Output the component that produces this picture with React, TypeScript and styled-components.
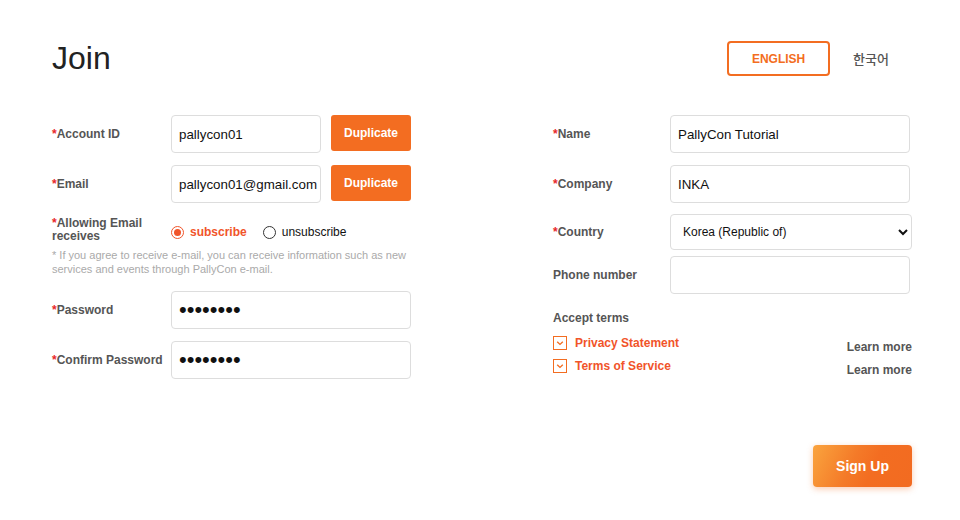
import React from "react";
import styled, { createGlobalStyle } from "styled-components";

const GlobalStyle = createGlobalStyle`
  html, body {
    margin: 0;
    padding: 0;
    background: #fff;
    font-family: "Liberation Sans", Arial, "Noto Sans CJK KR", sans-serif;
  }
  * { box-sizing: border-box; }
`;

const Check = () => (
  <svg width="10" height="10" viewBox="0 0 10 10">
    <path d="M2.2 3.8 L5 6.4 L7.8 3.8" fill="none" stroke="#f36d21" strokeWidth="1.4" />
  </svg>
);

const App = () => {
  return (
    <Page>
      <GlobalStyle />
      <Header>
        <Title>Join</Title>
        <LangGroup>
          <LangButton active>ENGLISH</LangButton>
          <LangButton>한국어</LangButton>
        </LangGroup>
      </Header>

      <Form>
        <Column>
          <Row>
            <Label>
              <Star>*</Star>Account ID
            </Label>
            <Input width={150} defaultValue="pallycon01" />
            <DupButton type="button">Duplicate</DupButton>
          </Row>
          <Row>
            <Label>
              <Star>*</Star>Email
            </Label>
            <Input width={150} defaultValue="pallycon01@gmail.com" />
            <DupButton type="button">Duplicate</DupButton>
          </Row>
          <RadioRow>
            <Label tight>
              <Star>*</Star>Allowing Email receives
            </Label>
            <RadioGroup>
              <RadioItem>
                <RadioCircle checked />
                <RadioText checked>subscribe</RadioText>
              </RadioItem>
              <RadioItem>
                <RadioCircle />
                <RadioText>unsubscribe</RadioText>
              </RadioItem>
            </RadioGroup>
          </RadioRow>
          <Note>
            * If you agree to receive e-mail, you can receive information such as new
            <br />
            services and events through PallyCon e-mail.
          </Note>
          <Row>
            <Label>
              <Star>*</Star>Password
            </Label>
            <Input width={240} secret type="password" defaultValue="12345678" />
          </Row>
          <Row>
            <Label>
              <Star>*</Star>Confirm Password
            </Label>
            <Input width={240} secret type="password" defaultValue="12345678" />
          </Row>
        </Column>

        <Column>
          <Row>
            <Label narrow>
              <Star>*</Star>Name
            </Label>
            <Input width={240} defaultValue="PallyCon Tutorial" />
          </Row>
          <Row>
            <Label narrow>
              <Star>*</Star>Company
            </Label>
            <Input width={240} defaultValue="INKA" />
          </Row>
          <SelectRow>
            <Label narrow>
              <Star>*</Star>Country
            </Label>
            <Select defaultValue="kr">
              <option value="kr">Korea (Republic of)</option>
            </Select>
          </SelectRow>
          <PhoneRow>
            <Label narrow>Phone number</Label>
            <Input width={240} />
          </PhoneRow>
          <TermsTitle>Accept terms</TermsTitle>
          <TermRow>
            <TermLeft>
              <CheckBox>
                <Check />
              </CheckBox>
              <TermText>Privacy Statement</TermText>
            </TermLeft>
            <LearnMore>Learn more</LearnMore>
          </TermRow>
          <TermRow>
            <TermLeft>
              <CheckBox>
                <Check />
              </CheckBox>
              <TermText>Terms of Service</TermText>
            </TermLeft>
            <LearnMore>Learn more</LearnMore>
          </TermRow>
        </Column>
      </Form>

      <Footer>
        <SignUp type="button">Sign Up</SignUp>
      </Footer>
    </Page>
  );
};

export default App;

const Page = styled.div`
  width: 960px;
  height: 520px;
  padding: 38px 48px 0 52px;
`;

const Header = styled.div`
  display: flex;
  justify-content: space-between;
  align-items: center;
  height: 40px;
  margin-bottom: 37px;
`;

const Title = styled.h1`
  margin: 0;
  font-size: 32px;
  font-weight: 400;
  color: #222;
  line-height: 40px;
  font-family: "Liberation Sans", Arial, sans-serif;
`;

const LangGroup = styled.div`
  display: flex;
  align-items: center;
  gap: 23px;
  padding-right: 23px;
  margin-top: 1px;
`;

const LangButton = styled.button<{ active?: boolean }>`
  width: ${(p) => (p.active ? "103px" : "auto")};
  height: 35px;
  border: ${(p) => (p.active ? "2px solid #f36d21" : "none")};
  border-radius: 4px;
  background: #fff;
  color: ${(p) => (p.active ? "#f36d21" : "#555")};
  font-size: ${(p) => (p.active ? "12px" : "13px")};
  font-weight: ${(p) => (p.active ? 700 : 500)};
  font-family: "Liberation Sans", Arial, "Noto Sans CJK KR", sans-serif;
  padding: 0;
  cursor: pointer;
`;

const Form = styled.div`
  display: flex;
  justify-content: space-between;
`;

const Column = styled.div`
  width: 359px;
  display: flex;
  flex-direction: column;
`;

const Row = styled.div`
  display: flex;
  align-items: center;
  height: 38px;
  margin-bottom: 12px;
`;

const SelectRow = styled(Row)`
  height: 36px;
  margin-top: -1px;
  margin-bottom: 6px;
`;

const PhoneRow = styled(Row)`
  margin-bottom: 16px;
`;

const RadioRow = styled.div`
  display: flex;
  align-items: center;
  margin-top: 2px;
`;

const Label = styled.label<{ narrow?: boolean; tight?: boolean }>`
  width: ${(p) => (p.narrow ? "117px" : "119px")};
  flex-shrink: 0;
  font-size: 12px;
  line-height: ${(p) => (p.tight ? "13px" : "16px")};
  font-weight: 700;
  color: #555;
  padding-right: ${(p) => (p.tight ? "24px" : "0")};
`;

const Star = styled.span`
  color: #e8262a;
`;

const Input = styled.input<{ width: number; secret?: boolean }>`
  width: ${(p) => p.width}px;
  height: 38px;
  border: 1px solid #ddd;
  border-radius: 4px;
  padding: 0 2px 0 7px;
  font-size: ${(p) => (p.secret ? "22px" : "13.33px")};
  color: #111;
  font-family: "Liberation Sans", Arial, sans-serif;
  outline: none;
`;

const DupButton = styled.button`
  align-self: flex-start;
  margin-left: 10px;
  width: 80px;
  height: 36px;
  border: none;
  border-radius: 3px;
  background: #f36d21;
  color: #fff;
  font-size: 12px;
  font-weight: 700;
  font-family: "Liberation Sans", Arial, sans-serif;
  padding: 0;
`;

const RadioGroup = styled.div`
  display: flex;
  align-items: center;
  gap: 16px;
  padding-top: 4px;
`;

const RadioItem = styled.div`
  display: flex;
  align-items: center;
  gap: 6px;
`;

const RadioCircle = styled.span<{ checked?: boolean }>`
  width: 13px;
  height: 13px;
  border-radius: 50%;
  border: 1px solid ${(p) => (p.checked ? "#f1542a" : "#333")};
  display: flex;
  align-items: center;
  justify-content: center;
  &::after {
    content: "";
    display: ${(p) => (p.checked ? "block" : "none")};
    width: 7px;
    height: 7px;
    border-radius: 50%;
    background: #f1542a;
  }
`;

const RadioText = styled.span<{ checked?: boolean }>`
  font-size: 12px;
  font-weight: ${(p) => (p.checked ? 700 : 400)};
  color: ${(p) => (p.checked ? "#f1542a" : "#111")};
`;

const Note = styled.p`
  margin: 5px 0 15px;
  font-size: 11px;
  line-height: 14px;
  color: #aaa;
  white-space: nowrap;
`;

const Select = styled.select`
  width: 242px;
  height: 36px;
  border: 1px solid #ddd;
  border-radius: 4px;
  padding: 0 8px;
  font-size: 12px;
  color: #111;
  background: #fff;
  font-family: "Liberation Sans", Arial, sans-serif;
  outline: none;
`;

const TermsTitle = styled.div`
  font-size: 12px;
  font-weight: 700;
  color: #555;
  line-height: 16px;
  margin-bottom: 10px;
`;

const TermRow = styled.div`
  display: flex;
  justify-content: space-between;
  align-items: flex-start;
  height: 23px;
`;

const TermLeft = styled.div`
  display: flex;
  align-items: center;
  gap: 8px;
`;

const CheckBox = styled.span`
  width: 14px;
  height: 14px;
  border: 1px solid #f36d21;
  background: #fff;
  display: flex;
  align-items: center;
  justify-content: center;
`;

const TermText = styled.span`
  font-size: 12px;
  font-weight: 700;
  color: #f1542a;
`;

const LearnMore = styled.a`
  font-size: 12px;
  font-weight: 700;
  color: #555;
  padding-top: 4px;
`;

const Footer = styled.div`
  display: flex;
  justify-content: flex-end;
  margin-top: 54px;
`;

const SignUp = styled.button`
  width: 99px;
  height: 42px;
  border: none;
  border-radius: 4px;
  background: linear-gradient(115deg, #faa43e 0%, #f47a28 40%, #f36d21 60%, #f26b21 100%);
  box-shadow: 0 2px 6px rgba(243, 109, 33, 0.35);
  color: #fff;
  font-size: 14px;
  font-weight: 700;
  font-family: "Liberation Sans", Arial, sans-serif;
  padding: 0;
`;
